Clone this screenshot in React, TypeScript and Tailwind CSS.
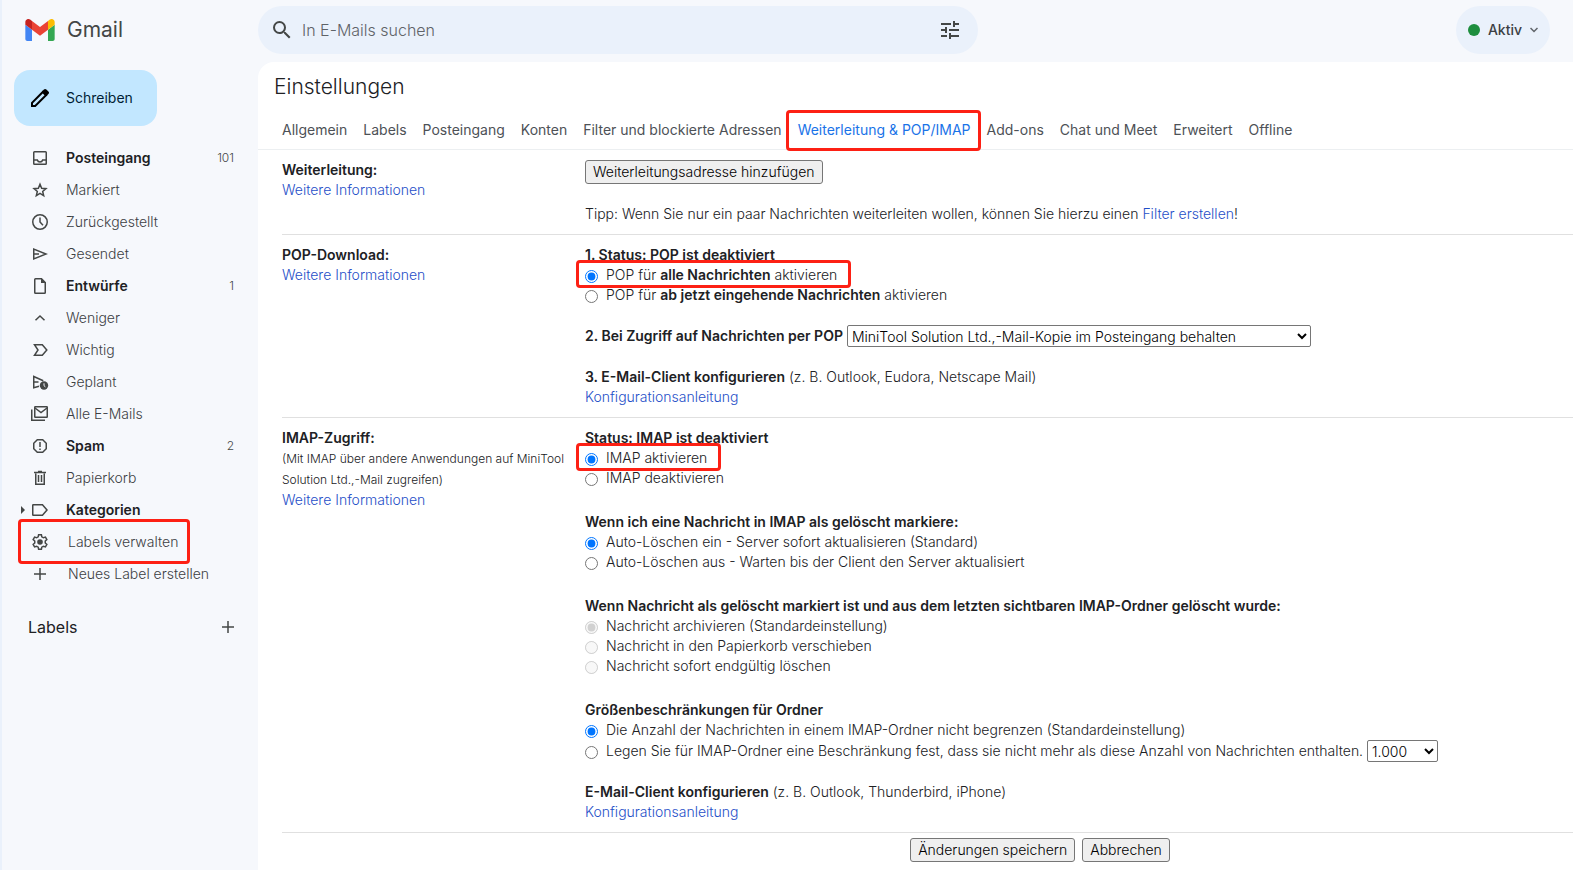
import { ReactNode } from "react";
import clsx from "clsx";
import { MdSearch, MdTune } from "react-icons/md";

const RED = "pointer-events-none absolute rounded-[4px] border-[3px] border-[#fd2014]";

function Icon({ children }: { children: ReactNode }) {
  return (
    <svg
      viewBox="0 0 20 20"
      className="size-5 shrink-0"
      fill="none"
      stroke="currentColor"
      strokeWidth="1.5"
      aria-hidden="true"
    >
      {children}
    </svg>
  );
}

function GmailLogo() {
  return (
    <svg viewBox="52 42 88 66" className="h-[22px] w-[30px]" aria-hidden="true">
      <path fill="#4285f4" d="M58 108h14V74L52 59v43c0 3.32 2.69 6 6 6" />
      <path fill="#34a853" d="M120 108h14c3.32 0 6-2.69 6-6V59l-20 15" />
      <path fill="#fbbc04" d="M120 48v26l20-15v-8c0-7.42-8.47-11.65-14.4-7.2" />
      <path fill="#ea4335" d="M72 74V48l24 18 24-18v26L96 92" />
      <path fill="#c5221f" d="M52 51v8l20 15V48l-5.6-4.2c-5.94-4.45-14.4-.22-14.4 7.2" />
    </svg>
  );
}

const icons = {
  inbox: (
    <Icon>
      <rect x="3.75" y="3.75" width="12.5" height="12.5" rx="0.75" />
      <path d="M4 12h3.3c.4 1.3 1.4 2 2.7 2s2.3-.7 2.7-2H16" />
    </Icon>
  ),
  star: (
    <Icon>
      <path d="M10 4.3l1.65 4 4.3.35-3.28 2.8 1 4.2L10 13.4l-3.67 2.25 1-4.2L4.05 8.65l4.3-.35z" />
    </Icon>
  ),
  clock: (
    <Icon>
      <circle cx="10" cy="10" r="7.25" />
      <path d="M10 5.5V10l3 3.2" />
    </Icon>
  ),
  send: (
    <Icon>
      <path d="M3.75 5v10L16 10z" />
      <path d="M4 10h5" />
    </Icon>
  ),
  file: (
    <Icon>
      <path d="M11.5 2.75H5.5a.75.75 0 0 0-.75.75v13c0 .4.35.75.75.75h9a.75.75 0 0 0 .75-.75V6.5z" />
      <path fill="currentColor" stroke="none" d="M11 2.5V7h4.8z" />
    </Icon>
  ),
  up: (
    <Icon>
      <path d="M5.5 12.3L10 8l4.5 4.3" />
    </Icon>
  ),
  important: (
    <Icon>
      <path d="M4.5 4.75h7.8L16.8 10l-4.5 5.25H4.5L8 10z" />
    </Icon>
  ),
  scheduled: (
    <Icon>
      <path d="M9 14.2l-5.25 1.6V4.5l9.5 4.3M4 10h4.5" />
      <circle cx="14" cy="13.5" r="4.2" fill="currentColor" stroke="none" />
      <path stroke="#f6f8fc" strokeWidth="1" d="M14 11.3v2.4l1.4 1.2" />
    </Icon>
  ),
  mails: (
    <Icon>
      <rect x="4.75" y="2.75" width="12.5" height="10.5" rx="0.5" />
      <path d="M5 4l6 4.5L17 4M1.75 5.5v10.75H15" />
    </Icon>
  ),
  spam: (
    <Icon>
      <path d="M7.3 3.75h5.4l3.55 3.55v5.4l-3.55 3.55H7.3L3.75 12.7V7.3z" />
      <path d="M10 6v5M10 12.4V14" />
    </Icon>
  ),
  trash: (
    <Icon>
      <path d="M5.75 5.5v10.75h8.5V5.5M4 4.5h12M8 3.5h4M8.5 7v7M11.5 7v7" />
    </Icon>
  ),
  label: (
    <Icon>
      <path d="M3.25 4.75h9.2L17 10l-4.55 5.25h-9.2a.5.5 0 0 1-.5-.5v-9.5a.5.5 0 0 1 .5-.5z" />
    </Icon>
  ),
  settings: (
    <Icon>
      <path d="M8.6 2.75h2.8l.4 2.1 1.6.95 2.05-.7 1.4 2.4-1.6 1.5v2l1.6 1.5-1.4 2.4-2.05-.7-1.6.95-.4 2.1H8.6l-.4-2.1-1.6-.95-2.05.7-1.4-2.4 1.6-1.5V9l-1.6-1.5 1.4-2.4 2.05.7 1.6-.95z" />
      <circle cx="10" cy="10" r="2.8" fill="currentColor" stroke="none" />
    </Icon>
  ),
  plus: (
    <Icon>
      <path d="M10 4v12M4 10h12" />
    </Icon>
  ),
};

interface NavItem {
  icon: keyof typeof icons;
  label: string;
  count?: string;
  bold?: boolean;
  arrow?: boolean;
  marked?: boolean;
}

const navItems: NavItem[] = [
  { icon: "inbox", label: "Posteingang", count: "101", bold: true },
  { icon: "star", label: "Markiert" },
  { icon: "clock", label: "Zurückgestellt" },
  { icon: "send", label: "Gesendet" },
  { icon: "file", label: "Entwürfe", count: "1", bold: true },
  { icon: "up", label: "Weniger" },
  { icon: "important", label: "Wichtig" },
  { icon: "scheduled", label: "Geplant" },
  { icon: "mails", label: "Alle E-Mails" },
  { icon: "spam", label: "Spam", count: "2", bold: true },
  { icon: "trash", label: "Papierkorb" },
  { icon: "label", label: "Kategorien", bold: true, arrow: true },
];

const labelItems: NavItem[] = [
  { icon: "settings", label: "Labels verwalten", marked: true },
  { icon: "plus", label: "Neues Label erstellen" },
];

const tabs = [
  "Allgemein",
  "Labels",
  "Posteingang",
  "Konten",
  "Filter und blockierte Adressen",
  "Weiterleitung & POP/IMAP",
  "Add-ons",
  "Chat und Meet",
  "Erweitert",
  "Offline",
];

function NavRow({ item, gap }: { item: NavItem; gap: string }) {
  return (
    <a
      href="#"
      className={clsx(
        "relative flex h-8 items-center pr-6 pl-7",
        gap,
        item.bold ? "font-semibold text-[#202124]" : "text-[#3c4043]",
      )}
    >
      {item.arrow && (
        <svg viewBox="0 0 4 8" className="absolute left-[19px] h-2 w-1" aria-hidden="true">
          <path fill="#444746" d="M0 0l4 4-4 4z" />
        </svg>
      )}
      <span className="text-[#444746]">{icons[item.icon]}</span>
      <span className="grow">{item.label}</span>
      {item.count && <span className="text-xs font-light text-[#444746]">{item.count}</span>}
      {item.marked && <span className={clsx(RED, "-top-[7px] -bottom-[6px] left-4 w-[172px]")} />}
    </a>
  );
}

function Sidebar() {
  return (
    <aside className="w-64 shrink-0 pt-2">
      <button className="ml-3 flex h-14 items-center gap-4 rounded-2xl bg-[#c2e7ff] pr-6 pl-4 font-normal text-[#001d35]">
        <svg viewBox="0 0 20 20" className="size-5" fill="none" aria-hidden="true">
          <path stroke="#000" strokeWidth="2" d="M2 18v-3.2L12.8 4l3.2 3.2L5.2 18z" />
          <path
            fill="#000"
            d="M12 3.5l1.9-1.9c.8-.8 1.7-.8 2.5 0l2 2c.8.8.8 1.7 0 2.5L16.5 8z"
          />
        </svg>
        Schreiben
      </button>

      <nav className="mt-4">
        {navItems.map((item) => (
          <NavRow key={item.label} item={item} gap="gap-4" />
        ))}
        {labelItems.map((item) => (
          <NavRow key={item.label} item={item} gap="gap-[18px]" />
        ))}
      </nav>

      <div className="mt-6 flex h-[26px] items-center justify-between pr-5 pl-[26px] text-[#202124]">
        <h2 className="text-base font-normal">Labels</h2>
        <button aria-label="Neues Label" className="text-[#444746]">
          {icons.plus}
        </button>
      </div>
    </aside>
  );
}

function Header() {
  return (
    <header className="flex h-[62px] items-start pt-[6px]">
      <div className="flex h-12 w-64 shrink-0 items-center gap-3 pl-[23px]">
        <GmailLogo />
        <span className="text-[21px] font-normal text-[#444746]">Gmail</span>
      </div>
      <form className="flex h-12 w-[720px] items-center rounded-full bg-[#eaf1fb] pr-4 pl-3 text-[#444746]">
        <button type="button" aria-label="Suchen">
          <MdSearch className="size-6" />
        </button>
        <input
          type="text"
          aria-label="In E-Mails suchen"
          placeholder="In E-Mails suchen"
          className="ml-2 grow text-base outline-none placeholder:text-[#5f6368]"
        />
        <button type="button" aria-label="Suchoptionen">
          <MdTune className="size-6" />
        </button>
      </form>
      <button className="mr-[23px] ml-auto flex h-12 items-center gap-2 rounded-full bg-[#eaf1fb] px-3 font-medium text-[#3c4043]">
        <span className="size-3 rounded-full bg-[#1e8e3e]" />
        Aktiv
        <svg viewBox="0 0 8 6" className="h-[6px] w-2" fill="none" aria-hidden="true">
          <path stroke="#5f6368" strokeWidth="1.5" d="M.5 1L4 4.5 7.5 1" />
        </svg>
      </button>
    </header>
  );
}

function Link({ children }: { children: ReactNode }) {
  return (
    <a href="#" className="text-[#1f4fc8]">
      {children}
    </a>
  );
}

function GrayButton({ children }: { children: ReactNode }) {
  return (
    <button className="h-6 rounded-[3px] border border-[#767676] bg-[#efefef] px-[7px] text-black">
      {children}
    </button>
  );
}

function Section({ label, children }: { label: ReactNode; children: ReactNode }) {
  return (
    <section className="ml-6 flex border-b border-[#e0e0e0] py-[10px]">
      <div className="w-[303px] shrink-0 pr-4">{label}</div>
      <div className="grow">{children}</div>
    </section>
  );
}

function Option({
  name,
  checked,
  disabled,
  marked,
  children,
}: {
  name: string;
  checked?: boolean;
  disabled?: boolean;
  marked?: boolean;
  children: ReactNode;
}) {
  return (
    <div>
      <label className="relative inline-flex items-start gap-2 align-top">
        <input
          type="radio"
          name={name}
          defaultChecked={checked}
          disabled={disabled}
          className="mt-[5px] size-[13px]"
        />
        <span>{children}</span>
        {marked && <span className={clsx(RED, "-top-[5px] -right-[14px] -bottom-[3px] -left-[9px]")} />}
      </label>
    </div>
  );
}

const SELECT = "h-[22px] border border-[#767676] rounded-[2px] bg-white text-black";

function Settings() {
  return (
    <main className="min-w-0 grow rounded-tl-2xl bg-white">
      <h1 className="h-12 pt-[9px] pl-4 text-[21px] leading-8">Einstellungen</h1>
      <div className="flex h-10 items-start gap-4 border-b border-[#eceff1] pt-[10px] pl-6 font-normal whitespace-nowrap text-[#4d5156]">
        {tabs.map((tab) =>
          tab.startsWith("Weiterleitung") ? (
            <a key={tab} href="#" className="relative text-[#1a73e8]">
              {tab}
              <span className={clsx(RED, "-top-[10px] -right-[10px] -bottom-[11px] -left-3")} />
            </a>
          ) : (
            <a key={tab} href="#">
              {tab}
            </a>
          ),
        )}
      </div>

      <Section
        label={
          <>
            <h2 className="font-semibold">Weiterleitung:</h2>
            <Link>Weitere Informationen</Link>
          </>
        }
      >
        <GrayButton>Weiterleitungsadresse hinzufügen</GrayButton>
        <p className="mt-5">
          Tipp: Wenn Sie nur ein paar Nachrichten weiterleiten wollen, können Sie hierzu einen{" "}
          <Link>Filter erstellen</Link>!
        </p>
      </Section>

      <Section
        label={
          <>
            <h2 className="font-semibold">POP-Download:</h2>
            <Link>Weitere Informationen</Link>
          </>
        }
      >
        <h3 className="font-semibold">1. Status: POP ist deaktiviert</h3>
        <Option name="pop" checked marked>
          POP für <b className="font-semibold">alle Nachrichten</b> aktivieren
        </Option>
        <Option name="pop">
          POP für <b className="font-semibold">ab jetzt eingehende Nachrichten</b> aktivieren
        </Option>
        <div className="mt-5 flex items-center gap-1">
          <label htmlFor="pop-action" className="font-semibold">
            2. Bei Zugriff auf Nachrichten per POP
          </label>
          <select id="pop-action" className={clsx(SELECT, "w-[464px]")}>
            <option>MiniTool Solution Ltd.,-Mail-Kopie im Posteingang behalten</option>
          </select>
        </div>
        <p className="mt-5">
          <b className="font-semibold">3. E-Mail-Client konfigurieren</b> (z. B. Outlook, Eudora,
          Netscape Mail)
        </p>
        <Link>Konfigurationsanleitung</Link>
      </Section>

      <Section
        label={
          <>
            <h2 className="font-semibold">IMAP-Zugriff:</h2>
            <p className="text-xs leading-[21px]">
              (Mit IMAP über andere Anwendungen auf MiniTool Solution Ltd.,-Mail zugreifen)
            </p>
            <Link>Weitere Informationen</Link>
          </>
        }
      >
        <h3 className="font-semibold">Status: IMAP ist deaktiviert</h3>
        <Option name="imap" checked marked>
          IMAP aktivieren
        </Option>
        <Option name="imap">IMAP deaktivieren</Option>

        <h3 className="mt-6 font-semibold">Wenn ich eine Nachricht in IMAP als gelöscht markiere:</h3>
        <Option name="expunge" checked>
          Auto-Löschen ein - Server sofort aktualisieren (Standard)
        </Option>
        <Option name="expunge">
          Auto-Löschen aus - Warten bis der Client den Server aktualisiert
        </Option>

        <h3 className="mt-6 font-semibold">
          Wenn Nachricht als gelöscht markiert ist und aus dem letzten sichtbaren IMAP-Ordner
          gelöscht wurde:
        </h3>
        <Option name="deleted" checked disabled>
          Nachricht archivieren (Standardeinstellung)
        </Option>
        <Option name="deleted" disabled>
          Nachricht in den Papierkorb verschieben
        </Option>
        <Option name="deleted" disabled>
          Nachricht sofort endgültig löschen
        </Option>

        <h3 className="mt-6 font-semibold">Größenbeschränkungen für Ordner</h3>
        <Option name="limit" checked>
          Die Anzahl der Nachrichten in einem IMAP-Ordner nicht begrenzen (Standardeinstellung)
        </Option>
        <div className="flex items-center gap-1">
          <Option name="limit">
            Legen Sie für IMAP-Ordner eine Beschränkung fest, dass sie nicht mehr als diese Anzahl
            von Nachrichten enthalten.
          </Option>
          <select aria-label="Anzahl von Nachrichten" className={clsx(SELECT, "w-[71px]")}>
            <option>1.000</option>
          </select>
        </div>

        <p className="mt-5">
          <b className="font-semibold">E-Mail-Client konfigurieren</b> (z. B. Outlook, Thunderbird,
          iPhone)
        </p>
        <Link>Konfigurationsanleitung</Link>
      </Section>

      <div className="flex justify-center gap-[7px] pt-[5px] pb-2 pl-[249px]">
        <GrayButton>Änderungen speichern</GrayButton>
        <GrayButton>Abbrechen</GrayButton>
      </div>
    </main>
  );
}

export default function App() {
  return (
    <div className="flex min-h-screen flex-col border-l-2 border-[#eaf1fb] bg-[#f6f8fc] font-['Inter',sans-serif] text-sm leading-5 font-light text-[#202124]">
      <Header />
      <div className="flex grow">
        <Sidebar />
        <Settings />
      </div>
    </div>
  );
}
